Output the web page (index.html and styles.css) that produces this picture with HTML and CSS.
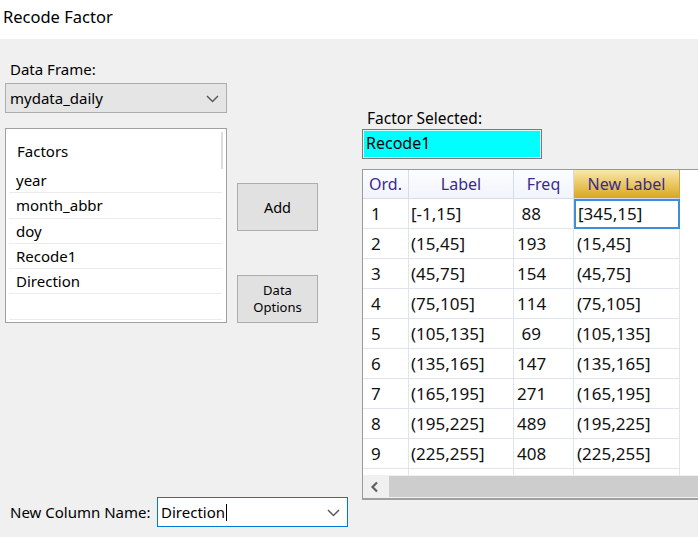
FILE: index.html
```html
<!DOCTYPE html>
<html>
<head>
<meta charset="utf-8">
<link rel="stylesheet" href="styles.css">
</head>
<body>
<div class="window">
  <div class="titlebar">Recode Factor</div>
  <div class="content">
    <div class="leftarea">
      <div class="toprow">
        <div class="leftcol">
          <div class="lbl df-label">Data Frame:</div>
          <div class="combo gray">
            <span class="combo-text">mydata_daily</span>
            <svg class="chev" width="13" height="8" viewBox="0 0 13 8"><polyline points="1,1 6.5,6.5 12,1" fill="none" stroke="#5a5a5a" stroke-width="1.5"/></svg>
          </div>
          <div class="listbox">
            <div class="lb-thumb"></div>
            <div class="lb-head">Factors</div>
            <div class="lb-item">year</div>
            <div class="lb-item">month_abbr</div>
            <div class="lb-item">doy</div>
            <div class="lb-item">Recode1</div>
            <div class="lb-item">Direction</div>
            <div class="lb-item"></div>
          </div>
        </div>
        <div class="midcol">
          <div class="btn btn-add">Add</div>
          <div class="btn btn-opt">Data<br>Options</div>
        </div>
      </div>
      <div class="bottomrow">
        <div class="lbl">New Column Name:</div>
        <div class="combo focus">
          <span class="combo-text">Direction</span><span class="caret"></span>
          <svg class="chev" width="13" height="8" viewBox="0 0 13 8"><polyline points="1,1 6.5,6.5 12,1" fill="none" stroke="#5a5a5a" stroke-width="1.5"/></svg>
        </div>
      </div>
    </div>
    <div class="rightcol">
      <div class="lbl fs-label">Factor Selected:</div>
      <div class="selbox">Recode1</div>
      <div class="grid">
        <div class="g-row g-head">
          <div class="c c-ord">Ord.</div>
          <div class="c c-lab">Label</div>
          <div class="c c-freq">Freq</div>
          <div class="c c-new gold">New Label</div>
          <div class="c c-fill"></div>
        </div>
        <div class="g-body">
          <div class="g-row"><div class="c c-ord">1</div><div class="c c-lab">[-1,15]</div><div class="c c-freq">&nbsp;88</div><div class="c c-new sel">[345,15]</div><div class="c c-fill"></div></div>
          <div class="g-row"><div class="c c-ord">2</div><div class="c c-lab">(15,45]</div><div class="c c-freq">193</div><div class="c c-new">(15,45]</div><div class="c c-fill"></div></div>
          <div class="g-row"><div class="c c-ord">3</div><div class="c c-lab">(45,75]</div><div class="c c-freq">154</div><div class="c c-new">(45,75]</div><div class="c c-fill"></div></div>
          <div class="g-row"><div class="c c-ord">4</div><div class="c c-lab">(75,105]</div><div class="c c-freq">114</div><div class="c c-new">(75,105]</div><div class="c c-fill"></div></div>
          <div class="g-row"><div class="c c-ord">5</div><div class="c c-lab">(105,135]</div><div class="c c-freq">&nbsp;69</div><div class="c c-new">(105,135]</div><div class="c c-fill"></div></div>
          <div class="g-row"><div class="c c-ord">6</div><div class="c c-lab">(135,165]</div><div class="c c-freq">147</div><div class="c c-new">(135,165]</div><div class="c c-fill"></div></div>
          <div class="g-row"><div class="c c-ord">7</div><div class="c c-lab">(165,195]</div><div class="c c-freq">271</div><div class="c c-new">(165,195]</div><div class="c c-fill"></div></div>
          <div class="g-row"><div class="c c-ord">8</div><div class="c c-lab">(195,225]</div><div class="c c-freq">489</div><div class="c c-new">(195,225]</div><div class="c c-fill"></div></div>
          <div class="g-row"><div class="c c-ord">9</div><div class="c c-lab">(225,255]</div><div class="c c-freq">408</div><div class="c c-new">(225,255]</div><div class="c c-fill"></div></div>
          <div class="g-row"><div class="c c-ord"></div><div class="c c-lab"></div><div class="c c-freq"></div><div class="c c-new"></div><div class="c c-fill"></div></div>
        </div>
        <div class="hscroll">
          <div class="hs-arrow"><svg width="10" height="12" viewBox="0 0 10 12"><polyline points="7,1.5 2.5,6 7,10.5" fill="none" stroke="#606060" stroke-width="2.2"/></svg></div>
          <div class="hs-thumb"></div>
        </div>
      </div>
    </div>
  </div>
</div>
</body>
</html>
```

FILE: styles.css
```css
* { box-sizing: border-box; }
html, body { margin: 0; padding: 0; }
body {
  width: 698px;
  height: 537px;
  overflow: hidden;
  background: #f0f0f0;
  font-family: "Noto Sans", "Open Sans", sans-serif;
  color: #000;
}
.window { width: 698px; height: 537px; display: flex; flex-direction: column; overflow: hidden; }
.titlebar {
  height: 39px;
  background: #fff;
  font-size: 16.5px;
  line-height: 34px;
  padding-left: 3px;
  flex: none;
}
.content { flex: 1; display: flex; }
.leftarea { width: 362px; flex: none; display: flex; flex-direction: column; }
.toprow { display: flex; }
.leftcol { margin-left: 5px; width: 222px; flex: none; }
.lbl { font-size: 15px; line-height: 20px; }
.df-label { margin-top: 20px; padding-left: 5px; }
.combo {
  position: relative;
  height: 30px;
  border: 1px solid #adadad;
  display: flex;
  align-items: center;
  font-size: 15px;
  padding-left: 4px;
}
.combo.gray { margin-top: 4px; background: #e5e5e5; }
.combo .chev { position: absolute; right: 7px; top: 11px; }
.combo-text { line-height: 20px; }
.listbox {
  position: relative;
  margin-top: 15px;
  height: 195px;
  background: #fff;
  border: 1px solid #a0a0a0;
  padding: 0 4px 0 3px;
  font-size: 15px;
}
.lb-thumb {
  position: absolute;
  right: 3px;
  top: 3px;
  width: 2px;
  height: 37px;
  background: #dcdcdc;
}
.lb-head { height: 39px; line-height: 20px; padding: 12px 0 0 8px; }
.lb-item {
  height: 25.3px;
  line-height: 24px;
  padding-left: 7px;
  border-bottom: 1.5px solid #ececec;
}
.midcol { margin-left: 10px; width: 81px; flex: none; padding-top: 144px; }
.btn {
  width: 81px;
  height: 48px;
  background: #e1e1e1;
  border: 1px solid #adadad;
  display: flex;
  align-items: center;
  justify-content: center;
  text-align: center;
}
.btn-add { font-size: 14.5px; }
.btn-opt { margin-top: 44px; font-size: 13px; line-height: 17px; }
.bottomrow {
  margin-top: auto;
  margin-bottom: 10px;
  display: flex;
  align-items: center;
  padding-left: 10px;
}
.bottomrow .lbl { width: 147px; flex: none; }
.combo.focus {
  width: 191px;
  background: #fff;
  border-color: #0078d7;
  padding-left: 3px;
}
.caret { display: inline-block; width: 1px; height: 17px; background: #000; margin-left: 1px; }
.rightcol { flex: none; width: 345px; }
.fs-label { margin-top: 69px; padding-left: 5px; font-size: 15.5px; }
.selbox {
  width: 180px;
  height: 30px;
  margin-top: 1px;
  background: #00ffff;
  border: 1px solid #7a7a7a;
  box-shadow: inset 0 0 0 1px #d8f8f8;
  font-size: 16px;
  line-height: 27px;
  padding-left: 3px;
}
.grid {
  margin-top: 10px;
  width: 345px;
  height: 331px;
  border-top: 1px solid #9a9a9a;
  border-left: 1px solid #9a9a9a;
  border-bottom: 2px solid #a0a0a0;
  background: #fff;
  display: flex;
  flex-direction: column;
}
.g-row { display: flex; height: 30px; flex: none; }
.c {
  flex: none;
  border-right: 1px solid #dfe4ef;
  border-bottom: 1px solid #dfe4ef;
  font-size: 17px;
  line-height: 29px;
  white-space: nowrap;
  overflow: hidden;
  color: #111;
}
.c-ord { width: 46px; padding-left: 8px; }
.c-lab { width: 105px; padding-left: 2px; }
.c-freq { width: 60px; padding-left: 3px; }
.c-new { width: 106px; padding-left: 3px; }
.c-fill { flex: 1; border: none; }
.g-head { height: 29px; }
.g-head .c {
  font-size: 16px;
  line-height: 28px;
  text-align: center;
  padding: 0;
  color: #3b2a8e;
  background: linear-gradient(#fcfdff, #f1f4fb);
  border-right-color: #d6dcea;
  border-bottom-color: #d6dcea;
}
.g-head .c-fill { background: #fff; }
.g-head .c.gold {
  background: linear-gradient(#f9e7ad, #e3bb47 70%, #d7a624);
  border-right-color: #c9a650;
}
.c.sel { border: 2px solid #3d8ed8; line-height: 26px; padding-left: 2px; }
.g-body { height: 276px; overflow: hidden; flex: none; }
.hscroll { height: 23px; display: flex; background: #f0f0f0; flex: none; }
.hs-arrow { width: 26px; display: flex; align-items: center; justify-content: center; padding-right: 2px; }
.hs-thumb { flex: 1; margin: 1px 0; background: #cdcdcd; }
```
